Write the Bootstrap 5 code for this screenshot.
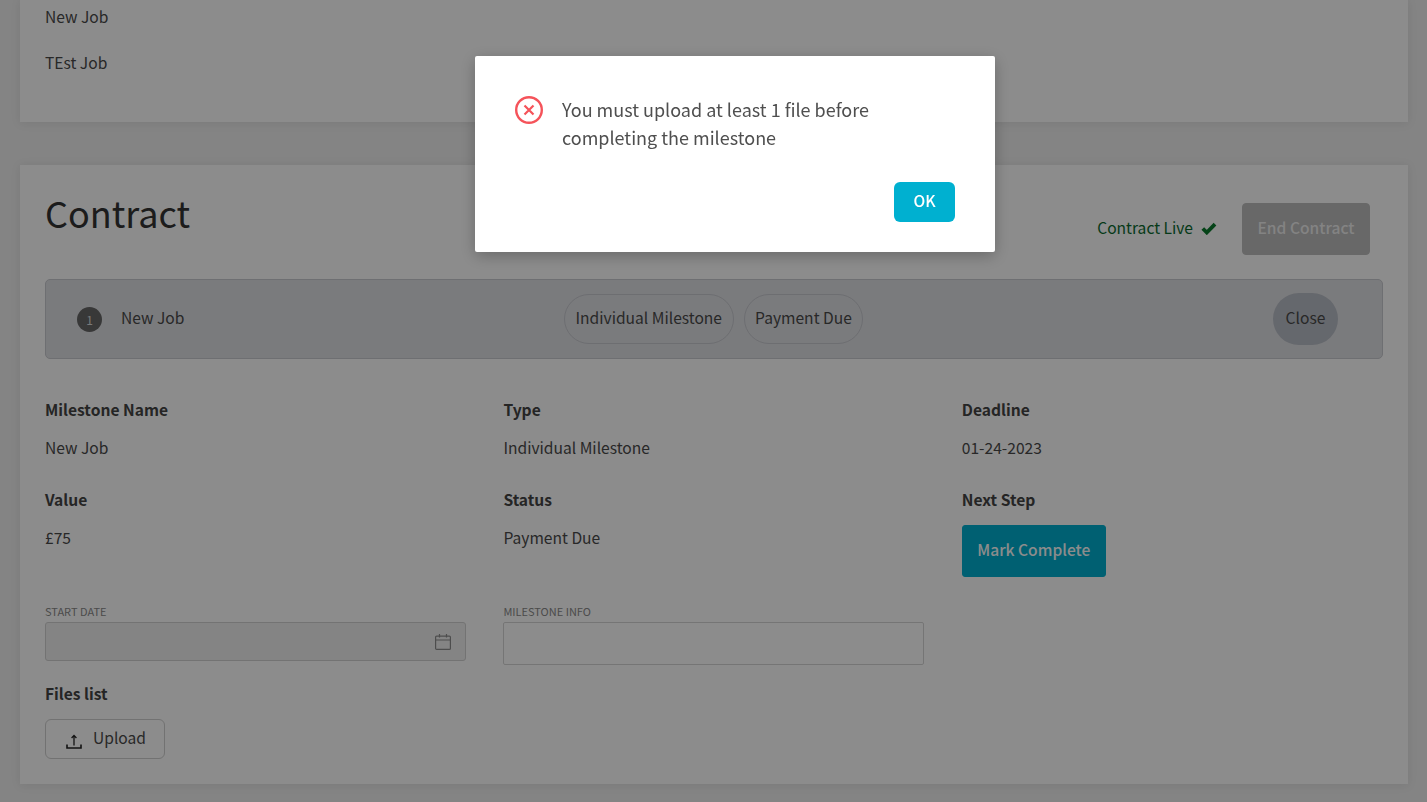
<!DOCTYPE html>
<html lang="en">
  <head>
    <meta charset="UTF-8" />
    <meta name="viewport" content="width=device-width, initial-scale=1.0" />
    <title>Contract</title>
    <link
      href="https://cdn.jsdelivr.net/npm/bootstrap@5.3.0/dist/css/bootstrap.min.css"
      rel="stylesheet"
    />
    <style>
      body {
        background: #f0f0f0;
        font-family: "Noto Sans CJK SC", "Noto Sans", sans-serif;
        font-size: 15.6px;
        line-height: 24px;
        color: #4a4a4a;
        height: 802px;
        overflow: hidden;
      }
      .page-wrap { padding: 0 19px 18px 20px; }
      .panel { border: 0; border-radius: 0; box-shadow: 0 1px 10px rgba(0, 0, 0, .08); background: #fff; }
      .jobs-panel { height: 122px; padding: 4px 25px 0; margin-bottom: 43px; }
      .jobs-panel div { height: 46px; }
      .contract-panel { height: 619px; padding: 25px 25px 0; }
      .contract-head { height: 89px; padding-right: 13px; }
      .contract-title { font-size: 36px; line-height: 50px; color: #333; font-weight: 400; margin: -3px 0 0; }
      .live-area { margin-top: 13px; }
      .live-text { color: #0b6b2f; margin-right: 8px; padding-bottom: 4px; }
      .live-tick { margin: 0 25px 2px 0; }
      .btn.end-btn {
        width: 128px; height: 52px; padding: 0 0 2px;
        background: #bdbdbd; border-color: #bdbdbd; color: #efefef; font-weight: 500; font-size: 15.6px;
        opacity: 1; border-radius: 4px; white-space: nowrap;
      }
      .milestone-bar {
        height: 80px; background: #dfe0e4; border: 1px solid #c8cacf; border-radius: 5px;
        padding: 0 44px 0 31px; margin-bottom: 38px;
      }
      .step-num {
        width: 25px; height: 25px; background: #666; color: #ddd; font-size: 12px; line-height: 25px;
        text-align: center; border-radius: 50%; margin-right: 19px; flex: none;
      }
      .bar-name { width: 443px; padding-bottom: 4px; }
      .tag-pill {
        height: 50px; padding: 0 10.5px; line-height: 44px; border: 1px solid #c6c8ce;
        border-radius: 25px; margin-right: 10px;
      }
      .close-btn {
        width: 65px; height: 52px; border-radius: 26px; background: #b9bdc6; border: 0;
        color: #4a4a4a; padding: 0 0 2px; font-size: 15.6px;
      }
      .detail-grid { display: grid; grid-template-columns: repeat(3, 421px); column-gap: 37.4px; }
      .detail-label { font-weight: 600; color: #444; height: 38px; line-height: 24px; margin: 0; }
      .detail-value { height: 52px; margin: 0; }
      .complete-btn {
        width: 144px; height: 52px; background: #00b0d0; border-color: #00b0d0; color: #fff;
        font-weight: 500; font-size: 15.6px; border-radius: 3px; padding: 0 0 2px;
      }
      .form-area { margin-top: 27px; }
      .field-label {
        display: block; font-size: 11px; line-height: 14px; color: #8a8a8a; text-transform: uppercase; margin: 0 0 4px;
      }
      .date-box {
        height: 39px; background: #f1f1f1; border: 1px solid #d2d2d2; border-radius: 3px; padding-right: 14px;
      }
      .info-box { height: 43px; border: 1px solid #d6d6d6; border-radius: 2px; padding: 0; background: #fff; }
      .files-title { font-weight: 600; color: #444; margin: 16px 0 14px; }
      .upload-btn {
        width: 120px; height: 40px; padding: 0 0 2px 20px; background: #fff; border: 1px solid #cfcfcf;
        border-radius: 6px; color: #4a4a4a; gap: 11px; font-size: 15.6px;
      }
      .upload-icon { margin-top: 5px; }
      .modal-backdrop.show { opacity: .45; background: #000; }
      .alert-dialog { max-width: 520px; margin: 56px 0 0 475px; }
      .alert-box {
        height: 196px; border: 0; border-radius: 2px; padding: 40px;
        box-shadow: 0 4px 16px rgba(0, 0, 0, .25);
      }
      .alert-text { font-size: 18px; line-height: 28px; color: #4f4f4f; margin: -1px 0 0 19px; }
      .ok-btn {
        width: 61px; height: 40px; background: #00b0d0; border: 0; color: #fff; font-weight: 500; font-size: 15.6px;
        border-radius: 6px; padding: 0 0 2px; margin-top: 31px;
      }
    </style>
  </head>
  <body>
    <div class="page-wrap">
      <div class="card panel jobs-panel">
        <div>New Job</div>
        <div>TEst Job</div>
      </div>

      <div class="card panel contract-panel">
        <div class="d-flex justify-content-between align-items-start contract-head">
          <h1 class="contract-title">Contract</h1>
          <div class="d-flex align-items-center live-area">
            <span class="live-text">Contract Live</span>
            <svg class="live-tick" width="16" height="13" viewBox="0 0 16 13">
              <path d="M1.8 6.5 L5.8 10.5 L14 2.2" fill="none" stroke="#0a7a2c" stroke-width="3.8" />
            </svg>
            <button class="btn end-btn" disabled>End Contract</button>
          </div>
        </div>

        <div class="d-flex align-items-center milestone-bar">
          <span class="step-num">1</span>
          <span class="bar-name">New Job</span>
          <span class="tag-pill">Individual Milestone</span>
          <span class="tag-pill">Payment Due</span>
          <button class="btn close-btn ms-auto">Close</button>
        </div>

        <div class="detail-grid">
          <div>
            <p class="detail-label">Milestone Name</p>
            <p class="detail-value">New Job</p>
          </div>
          <div>
            <p class="detail-label">Type</p>
            <p class="detail-value">Individual Milestone</p>
          </div>
          <div>
            <p class="detail-label">Deadline</p>
            <p class="detail-value">01-24-2023</p>
          </div>
          <div>
            <p class="detail-label">Value</p>
            <p class="detail-value">£75</p>
          </div>
          <div>
            <p class="detail-label">Status</p>
            <p class="detail-value">Payment Due</p>
          </div>
          <div>
            <p class="detail-label">Next Step</p>
            <button class="btn complete-btn">Mark Complete</button>
          </div>
        </div>

        <div class="detail-grid form-area">
          <div>
            <label class="field-label">Start Date</label>
            <div class="date-box d-flex align-items-center justify-content-end">
              <svg width="16" height="16" viewBox="0 0 16 16" fill="none" stroke="#8d8d8d" stroke-width="1.2">
                <rect x="0.6" y="2.1" width="14.8" height="13.3" rx="1" />
                <path d="M0.6 6 H15.4 M4.5 0 V3.5 M11.5 0 V3.5" />
              </svg>
            </div>
          </div>
          <div>
            <label class="field-label">Milestone Info</label>
            <input class="form-control info-box" type="text" />
          </div>
        </div>

        <p class="files-title">Files list</p>
        <button class="btn upload-btn d-flex align-items-center">
          <svg class="upload-icon" width="16" height="16" viewBox="0 0 16 16" fill="none" stroke="#222" stroke-width="1.3">
            <path d="M1 11.5 V15 H15 V11.5" stroke-width="1.6" />
            <path d="M8 12.5 V2.5 M5.6 5 L8 2.4 L10.4 5" />
          </svg>
          <span>Upload</span>
        </button>
      </div>
    </div>

    <div class="modal-backdrop show"></div>
    <div class="modal d-block" tabindex="-1">
      <div class="modal-dialog alert-dialog">
        <div class="modal-content alert-box">
          <div class="d-flex">
            <svg width="28" height="28" viewBox="0 0 28 28" fill="none" stroke="#f5535a" stroke-width="2.4">
              <circle cx="14" cy="14" r="12.8" />
              <path d="M9.5 9.5 L18.5 18.5 M18.5 9.5 L9.5 18.5" stroke-width="2.2" />
            </svg>
            <p class="alert-text">You must upload at least 1 file before<br />completing the milestone</p>
          </div>
          <div class="d-flex justify-content-end">
            <button class="btn ok-btn">OK</button>
          </div>
        </div>
      </div>
    </div>

    <script src="https://cdn.jsdelivr.net/npm/bootstrap@5.3.0/dist/js/bootstrap.bundle.min.js"></script>
  </body>
</html>
